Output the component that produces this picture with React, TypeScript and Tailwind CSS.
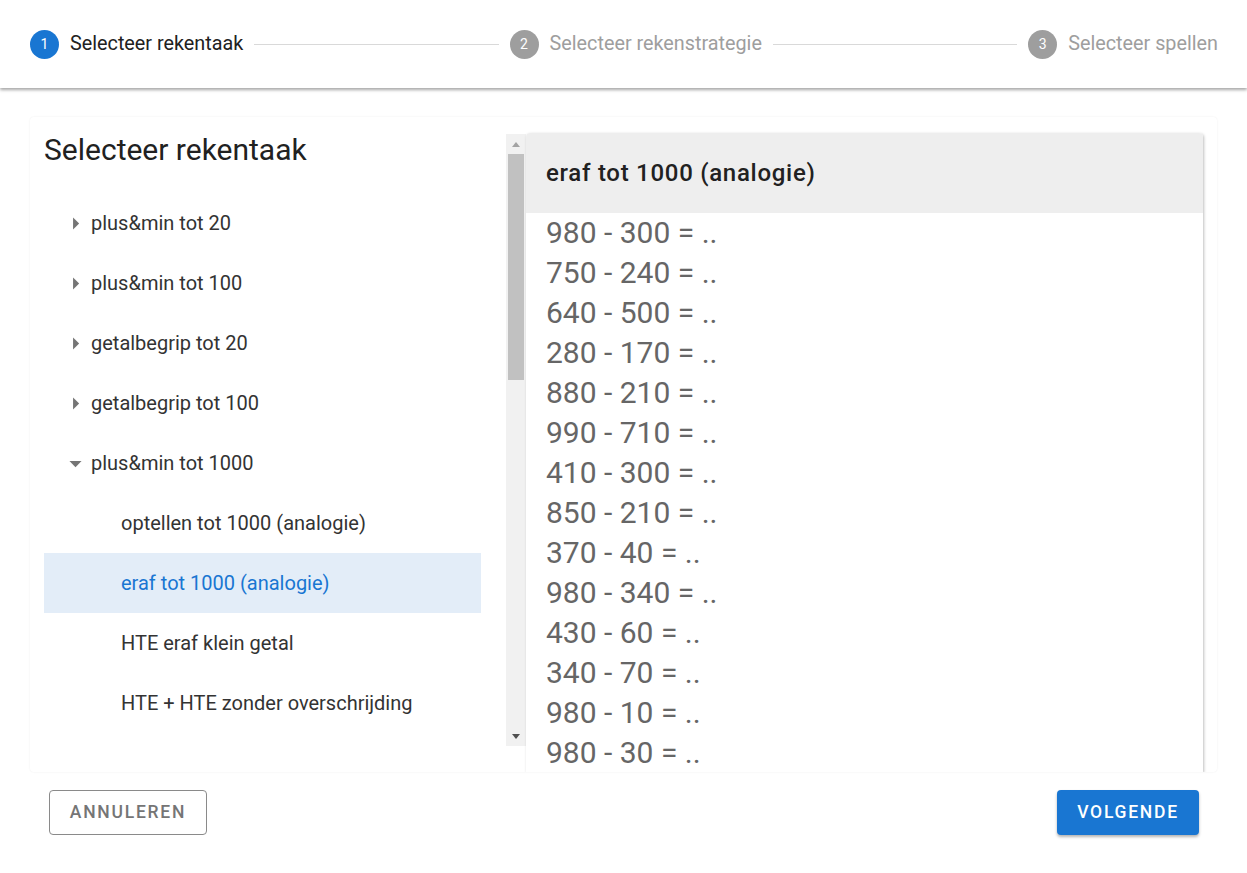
import { Fragment } from 'react';

const steps = [
  { n: 1, label: 'Selecteer rekentaak', active: true },
  { n: 2, label: 'Selecteer rekenstrategie', active: false },
  { n: 3, label: 'Selecteer spellen', active: false },
];

const groups = ['plus&min tot 20', 'plus&min tot 100', 'getalbegrip tot 20', 'getalbegrip tot 100'];
const children = [
  'optellen tot 1000 (analogie)',
  'eraf tot 1000 (analogie)',
  'HTE eraf klein getal',
  'HTE + HTE zonder overschrijding',
];

const sums = [
  '980 - 300 = ..',
  '750 - 240 = ..',
  '640 - 500 = ..',
  '280 - 170 = ..',
  '880 - 210 = ..',
  '990 - 710 = ..',
  '410 - 300 = ..',
  '850 - 210 = ..',
  '370 - 40 = ..',
  '980 - 340 = ..',
  '430 - 60 = ..',
  '340 - 70 = ..',
  '980 - 10 = ..',
  '980 - 30 = ..',
];

const Caret = ({ open }: { open?: boolean }) => (
  <svg width="29" height="29" viewBox="0 0 24 24" className="text-[#757575]">
    {open ? <path d="M7 10l5 5 5-5z" fill="currentColor" /> : <path d="M10 17l5-5-5-5v10z" fill="currentColor" />}
  </svg>
);

const App = () => {
  return (
    <div className="w-full h-[873px] bg-white flex flex-col overflow-hidden" style={{ fontFamily: 'Roboto, sans-serif' }}>
      {/* stepper */}
      <div className="h-[88px] shrink-0 flex items-center gap-[11px] pl-[30px] pr-[29px] shadow-[0_2px_3px_rgba(0,0,0,0.35)] relative z-10">
        {steps.map((s, i) => (
          <Fragment key={s.n}>
            <div className="flex items-center gap-[11px]">
              <div
                className={`w-[29px] h-[29px] rounded-full flex items-center justify-center text-white text-[14px] ${
                  s.active ? 'bg-[#1976d2]' : 'bg-[#9e9e9e]'
                }`}
              >
                {s.n}
              </div>
              <span className={`text-[19.8px] ${s.active ? 'text-[#212121]' : 'text-[#9e9e9e]'}`}>{s.label}</span>
            </div>
            {i < steps.length - 1 && <div className="flex-1 h-px bg-[#d9d9d9]" />}
          </Fragment>
        ))}
      </div>

      {/* content */}
      <div className="mx-[30px] mt-[29px] h-[655px] shrink-0 rounded-[4px] shadow-[0_0_2px_rgba(0,0,0,0.08)] overflow-hidden flex">
        <div className="w-[476px] shrink-0 pl-[14px] pr-[25px] pt-[13px]">
          <h1 className="text-[30px] leading-[39px] text-[#212121]">Selecteer rekentaak</h1>
          <ul className="mt-[24px]">
            {groups.map((g) => (
              <li key={g} className="h-[60px] flex items-center text-[20px] text-[#333]">
                <span className="w-[47px] flex justify-end pr-[1px]">
                  <Caret />
                </span>
                {g}
              </li>
            ))}
            <li className="h-[60px] flex items-center text-[20px] text-[#333]">
              <span className="w-[47px] flex justify-end pr-[1px]">
                <Caret open />
              </span>
              plus&min tot 1000
            </li>
            {children.map((c, i) => (
              <li
                key={c}
                className={`h-[60px] flex items-center pl-[77px] text-[20px] ${
                  i === 1 ? 'bg-[#e3edf8] text-[#1976d2]' : 'text-[#333]'
                }`}
              >
                {c}
              </li>
            ))}
          </ul>
        </div>

        {/* scrollbar */}
        <div className="w-[20px] shrink-0 mt-[17px] h-[612px] bg-[#f1f1f1] flex flex-col items-center">
          <div className="h-[20px] flex items-center">
            <svg width="8" height="5" viewBox="0 0 8 5">
              <path d="M0 5 L4 0 L8 5 Z" fill="#a3a3a3" />
            </svg>
          </div>
          <div className="w-[16px] h-[226px] bg-[#c1c1c1]" />
          <div className="flex-1" />
          <div className="h-[20px] flex items-center">
            <svg width="8" height="5" viewBox="0 0 8 5">
              <path d="M0 0 L8 0 L4 5 Z" fill="#505050" />
            </svg>
          </div>
        </div>

        {/* detail panel */}
        <div className="w-[677px] shrink-0 mt-[16px] rounded-t-[4px] bg-white shadow-[1px_1px_3px_rgba(0,0,0,0.25)]">
          <div className="h-[80px] bg-[#eeeeee] rounded-t-[4px] flex items-center px-[20px] text-[24px] tracking-[0.03em] font-medium text-[#212121]">
            eraf tot 1000 (analogie)
          </div>
          <ul className="px-[20px] -mt-[1px]">
            {sums.map((s, i) => (
              <li key={i} className="h-[40px] flex items-center text-[30px] text-[#666]">
                {s}
              </li>
            ))}
          </ul>
        </div>
      </div>

      {/* footer */}
      <div className="flex justify-between pr-[48px] pl-[49px] mt-[18px]">
        <button className="h-[45px] w-[158px] rounded-[4px] border border-[#8a8a8a] text-[#757575] text-[17.5px] font-medium tracking-[0.1em] uppercase">
          Annuleren
        </button>
        <button className="h-[45px] w-[142px] rounded-[4px] bg-[#1976d2] text-white text-[17.5px] font-medium tracking-[0.1em] uppercase shadow-[0_2px_3px_rgba(0,0,0,0.3)]">
          Volgende
        </button>
      </div>
    </div>
  );
};

export default App;
